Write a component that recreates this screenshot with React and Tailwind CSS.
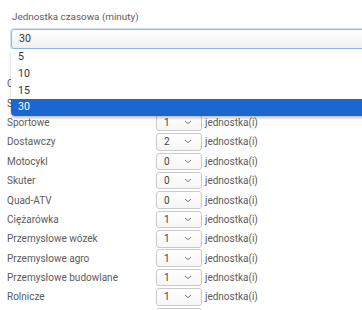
import React from "react";

const rows = [
  ["Osobowe", 1],
  ["SUV", 1],
  ["Sportowe", 1],
  ["Dostawczy", 2],
  ["Motocykl", 0],
  ["Skuter", 0],
  ["Quad-ATV", 0],
  ["Ciężarówka", 1],
  ["Przemysłowe wózek", 1],
  ["Przemysłowe agro", 1],
  ["Przemysłowe budowlane", 1],
  ["Rolnicze", 1],
  ["Inne", 1],
];

const options = ["5", "10", "15", "30"];

const Chevron = () => (
  <svg width="8" height="5" viewBox="0 0 8 5" className="shrink-0">
    <path d="M1 1l3 2.6L7 1" fill="none" stroke="#777" strokeWidth="1" />
  </svg>
);

const App = () => {
  return (
    <div className="relative h-[310px] w-full overflow-hidden bg-white font-['Roboto',sans-serif] text-[10px] text-[#5c5c5c]">
      {/* TIME UNIT FIELD */}
      <div className="pt-[11px]">
        <div className="pl-[12px] leading-[12px] text-[9.9px] text-[#5c5c5c]">
          Jednostka czasowa (minuty)
        </div>
        <div className="mt-[6px] ml-[11px] h-[20px] w-[400px] rounded-l-[3px] border border-[#8fb6ea] bg-gradient-to-b from-white to-[#efefef] shadow-[0_0_0_1px_#d3e4fa] flex items-center pl-[7px] text-[10.6px] text-[#333]">
          30
        </div>
      </div>

      {/* VEHICLE ROWS */}
      <div className="mt-[25px]">
        {rows.map(([name, count]) => (
          <div key={name} className="flex h-[19.4px] items-center">
            <div className="w-[156px] pl-[7px] whitespace-nowrap">{name}</div>
            <div className="flex h-[17.5px] w-[46px] items-center justify-between rounded-[3px] border border-[#cbcbcb] bg-gradient-to-b from-white to-[#f6f6f6] pl-[7px] pr-[9px] text-[#444]">
              <span>{count}</span>
              <Chevron />
            </div>
            <span className="ml-[3px] whitespace-nowrap">jednostka(i)</span>
          </div>
        ))}
      </div>

      {/* OPEN DROPDOWN */}
      <div className="absolute left-[11px] top-[49px] w-[400px] rounded-bl-[4px] bg-white shadow-[0_2px_3px_rgba(0,0,0,0.25)] overflow-hidden">
        {options.map((o) => (
          <div
            key={o}
            className={`flex h-[16.7px] items-center pl-[7px] text-[10.6px] ${
              o === "30" ? "bg-[#1a67d2] text-white" : "text-[#333]"
            }`}
          >
            {o}
          </div>
        ))}
      </div>
    </div>
  );
};

export default App;
